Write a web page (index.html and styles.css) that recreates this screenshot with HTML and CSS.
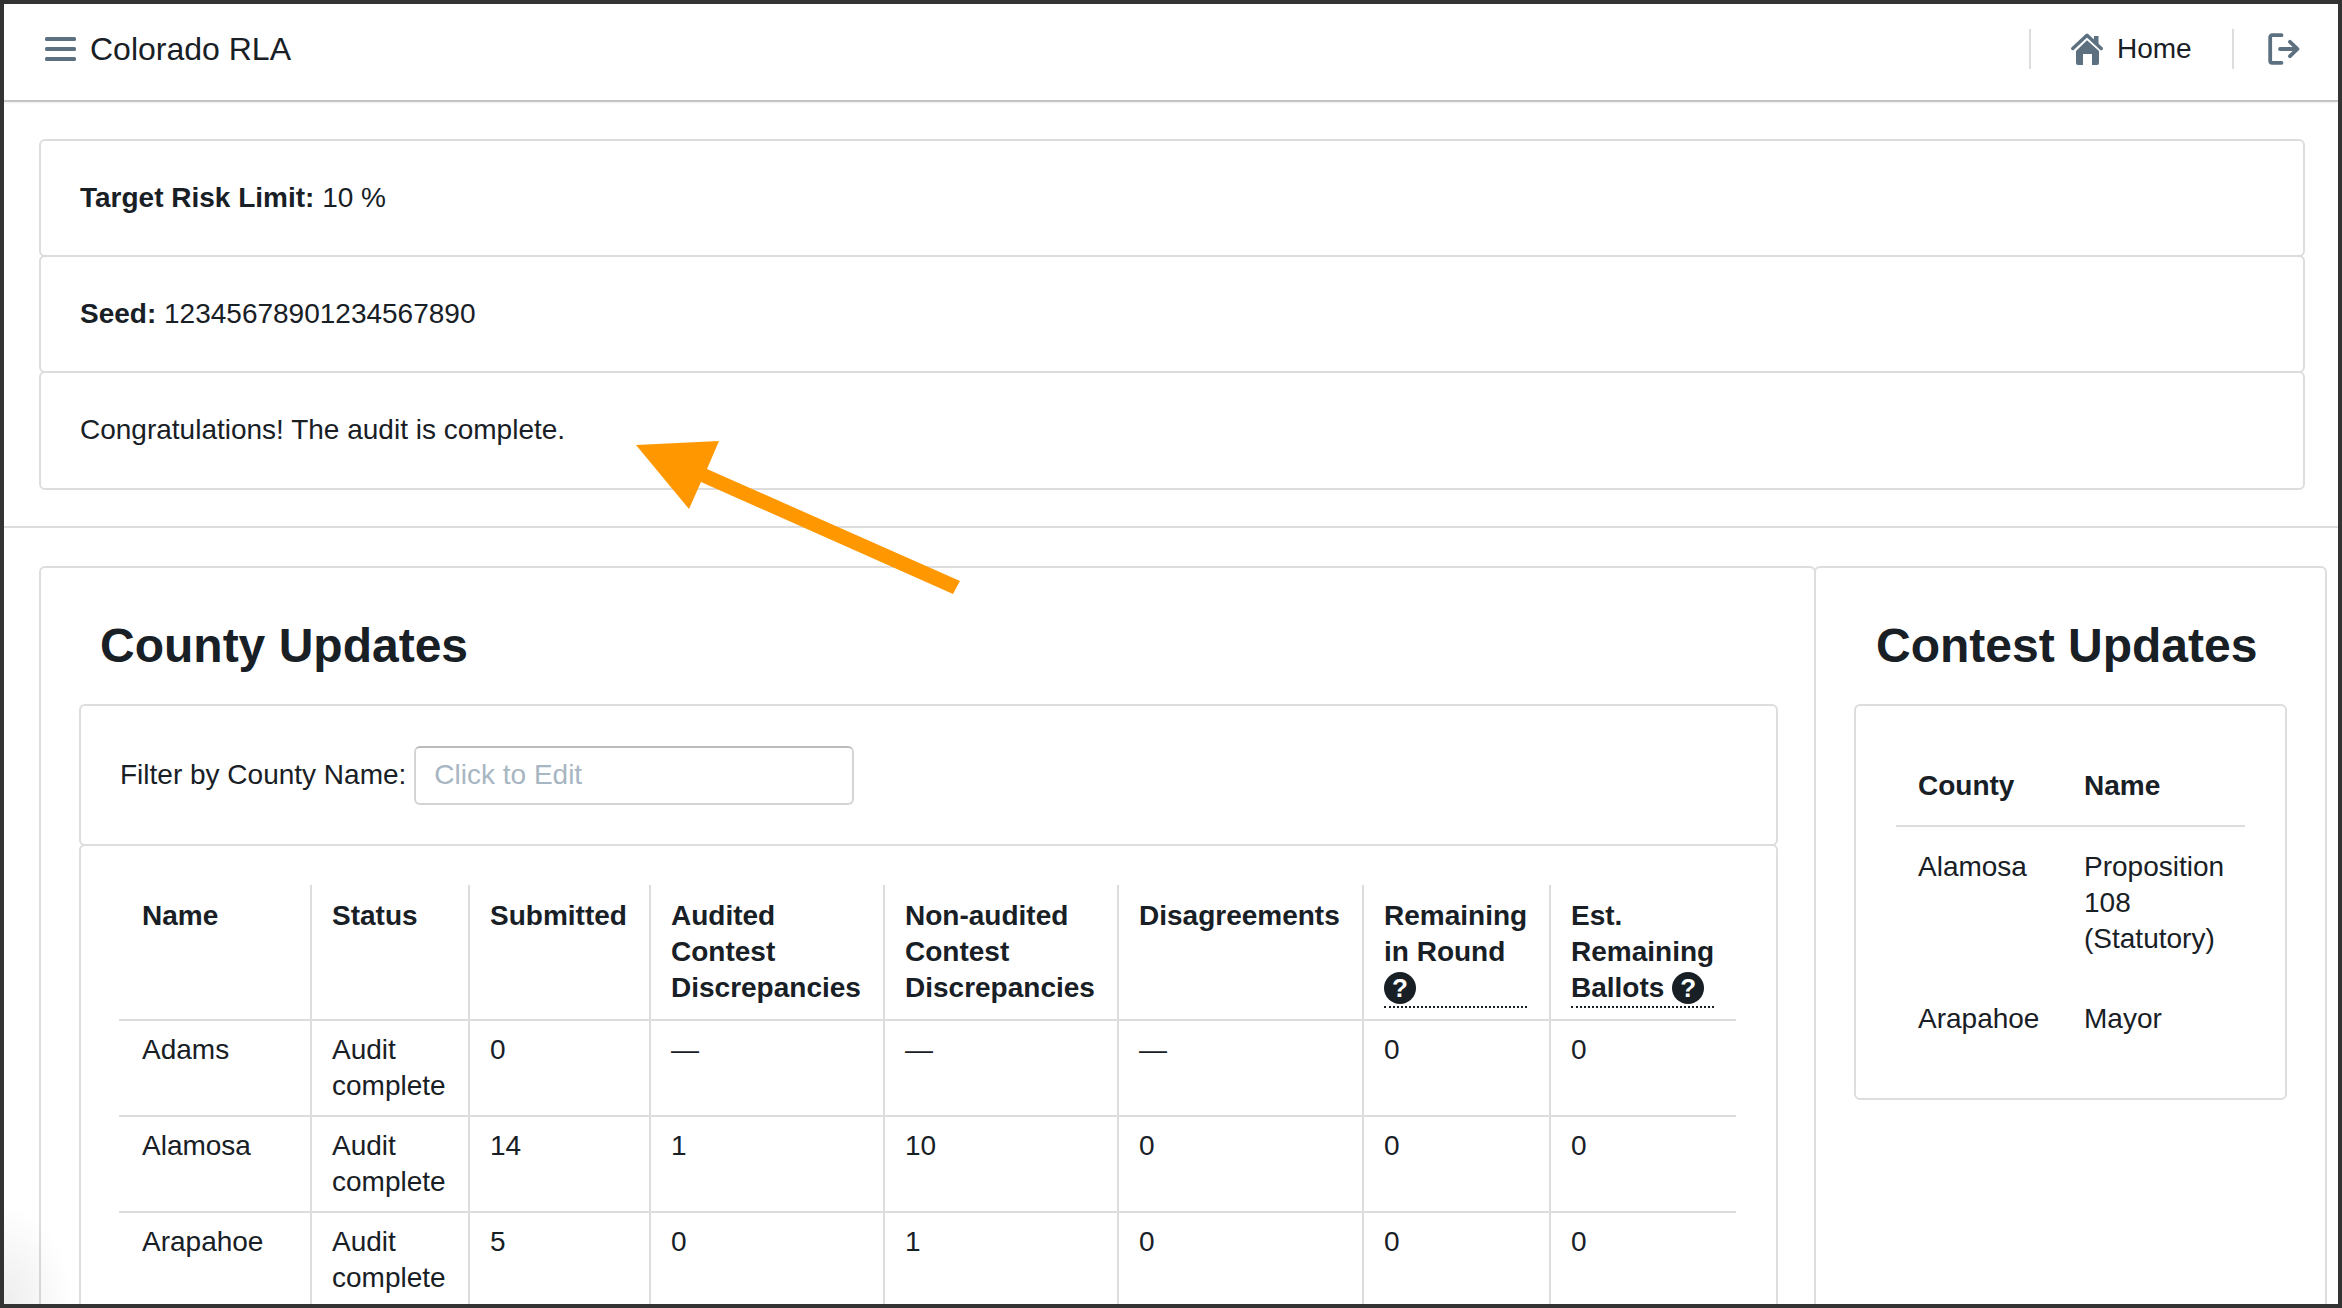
FILE: index.html
```html
<!DOCTYPE html>
<html lang="en">
<head>
    <meta charset="UTF-8">
    <meta name="viewport" content="width=device-width, initial-scale=1.0">
    <title>Colorado RLA</title>
    <link rel="stylesheet" href="styles.css">
</head>
<body>
    <div class="page">
        <nav class="navbar">
            <svg class="menu-icon" viewBox="0 0 31 24" width="31" height="24">
                <rect x="0" y="0" width="31" height="4" rx="1.5"/>
                <rect x="0" y="10" width="31" height="4" rx="1.5"/>
                <rect x="0" y="20" width="31" height="4" rx="1.5"/>
            </svg>
            <span class="brand">Colorado RLA</span>
            <div class="nav-right">
                <a class="nav-item nav-home">
                    <svg class="home-icon" viewBox="0 0 32 32" width="32" height="32">
                        <path d="M1.8 15.5 16 2.2l14.2 13.3" fill="none" stroke-width="3.4" stroke-linecap="round" stroke-linejoin="round"/>
                        <rect x="23" y="3" width="4.5" height="8" stroke="none"/>
                        <path d="M16 7.2 28 18v12a2 2 0 0 1-2 2h-5V21h-9v11H7a2 2 0 0 1-2-2V18z" stroke="none"/>
                    </svg>
                    Home
                </a>
                <a class="nav-item nav-logout">
                    <svg class="logout-icon" viewBox="0 0 32 32" width="32" height="32">
                        <path d="M13.5 2.2H4.2a2 2 0 0 0-2 2v23.6a2 2 0 0 0 2 2h9.3"/>
                        <path d="M12 16h17M22 8.800 29.500 16 22 23.200"/>
                    </svg>
                </a>
            </div>
        </nav>

        <div class="info-stack">
            <div class="card info-card"><strong>Target Risk Limit:</strong> 10 %</div>
            <div class="card info-card"><strong>Seed:</strong> 12345678901234567890</div>
            <div class="card info-card info-last">Congratulations! The audit is complete.</div>
        </div>

        <hr class="divider">

        <div class="updates">
            <section class="card panel county-panel">
                <h2>County Updates</h2>
                <div class="card filter-card">
                    <label for="countyFilter">Filter by County Name:</label>
                    <input id="countyFilter" type="text" placeholder="Click to Edit">
                </div>
                <div class="card table-card">
                    <table class="county-table">
                        <colgroup>
                            <col class="c-name"><col class="c-status"><col class="c-sub"><col class="c-aud">
                            <col class="c-non"><col class="c-dis"><col class="c-rem"><col class="c-est">
                        </colgroup>
                        <thead>
                            <tr>
                                <th>Name</th>
                                <th>Status</th>
                                <th>Submitted</th>
                                <th>Audited Contest Discrepancies</th>
                                <th>Non-audited Contest Discrepancies</th>
                                <th>Disagreements</th>
                                <th><span class="tip">Remaining in Round <span class="help">?</span></span></th>
                                <th><span class="tip">Est. Remaining Ballots <span class="help">?</span></span></th>
                            </tr>
                        </thead>
                        <tbody>
                            <tr>
                                <td>Adams</td><td>Audit complete</td><td>0</td><td>—</td><td>—</td><td>—</td><td>0</td><td>0</td>
                            </tr>
                            <tr>
                                <td>Alamosa</td><td>Audit complete</td><td>14</td><td>1</td><td>10</td><td>0</td><td>0</td><td>0</td>
                            </tr>
                            <tr>
                                <td>Arapahoe</td><td>Audit complete</td><td>5</td><td>0</td><td>1</td><td>0</td><td>0</td><td>0</td>
                            </tr>
                        </tbody>
                    </table>
                </div>
            </section>

            <section class="card panel contest-panel">
                <h2>Contest Updates</h2>
                <div class="card contest-card">
                    <table class="contest-table">
                        <thead>
                            <tr><th class="c-county">County</th><th>Name</th></tr>
                        </thead>
                        <tbody>
                            <tr><td>Alamosa</td><td>Proposition 108 (Statutory)</td></tr>
                            <tr><td>Arapahoe</td><td>Mayor</td></tr>
                        </tbody>
                    </table>
                </div>
            </section>
        </div>

        <!-- annotation drawn over the screenshot -->
        <svg class="arrow" viewBox="0 0 340 160" width="340" height="160">
            <polygon points="6,9 89,5 77,33 330,145 323,158 71,46 59,73"/>
        </svg>
        <div class="corner-shade"></div>
    </div>
</body>
</html>
```

FILE: styles.css
```css
* {
    box-sizing: border-box;
}
body {
    margin: 0;
    font-family: "Liberation Sans", Arial, sans-serif;
    font-size: 28px;
    line-height: 36px;
    color: #182026;
    background: #fff;
}
.page {
    position: relative;
    width: 2342px;
    height: 1308px;
    overflow: hidden;
    border: 4px solid #333;
    background: #fff;
}

/* navbar */
.navbar {
    display: flex;
    align-items: center;
    height: 98px;
    padding: 0 0 6px 41px;
    border-bottom: 2px solid #c4c4c4;
    box-shadow: 0 1px 2px rgba(0, 0, 0, 0.08);
}
.menu-icon {
    fill: #5c7080;
}
.brand {
    margin-left: 14px;
    font-size: 32px;
}
.nav-right {
    display: flex;
    align-items: center;
    margin-left: auto;
}
.nav-item {
    display: flex;
    align-items: center;
    height: 40px;
    border-left: 2px solid #ddd;
}
.nav-home {
    width: 203px;
    padding-left: 40px;
    gap: 14px;
}
.nav-logout {
    width: 106px;
    padding-left: 34px;
}
.home-icon {
    fill: #5c7080;
    stroke: #5c7080;
}
.logout-icon {
    fill: none;
    stroke: #5c7080;
    stroke-width: 3.8;
    stroke-linecap: round;
    stroke-linejoin: round;
}

/* cards */
.card {
    border: 2px solid #ddd;
    border-radius: 6px;
    background: #fff;
}
.info-stack {
    margin: 37px 33px 0 35px;
}
.info-card {
    height: 118px;
    margin-bottom: -2px;
    padding: 39px 39px;
}
.info-last {
    height: 119px;
    margin-bottom: 0;
}
.divider {
    height: 2px;
    margin: 36px 0 38px;
    border: 0;
    background: #ddd;
}

/* update panels */
.updates {
    display: flex;
    align-items: flex-start;
    margin: 0 11px 0 35px;
}
.panel {
    padding: 50px 38px 0;
}
.panel h2 {
    margin: 0 0 30px 21px;
    font-size: 48px;
    line-height: 56px;
    font-weight: bold;
}
.county-panel {
    width: 1777px;
    height: 900px;
    padding-right: 36px;
}
.contest-panel {
    width: 513px;
    height: 900px;
    margin-left: -2px;
}
.contest-panel h2 {
    margin-left: 22px;
    white-space: nowrap;
}
.filter-card {
    display: flex;
    align-items: center;
    height: 142px;
    padding: 0 39px;
    gap: 8px;
}
.filter-card input {
    width: 440px;
    height: 59px;
    padding: 0 18px;
    font: inherit;
    color: #182026;
    border: 2px solid #d4d4d4;
    border-top-color: #bbb;
    border-radius: 6px;
}
.filter-card input::placeholder {
    color: #a7b6c2;
}

/* county table */
.table-card {
    height: 700px;
    margin-top: -2px;
    padding: 39px 38px;
}
table {
    border-collapse: separate;
    border-spacing: 0;
}
.county-table {
    table-layout: fixed;
    width: 1617px;
}
.c-name { width: 191px; }
.c-status { width: 158px; }
.c-sub { width: 181px; }
.c-aud { width: 234px; }
.c-non { width: 234px; }
.c-dis { width: 245px; }
.c-rem { width: 187px; }
.c-est { width: 187px; }
th, td {
    text-align: left;
    vertical-align: top;
}
.county-table th, .county-table td {
    padding: 13px 22px 11px 20px;
    border-left: 2px solid #ddd;
    border-bottom: 2px solid #ddd;
}
.county-table td {
    padding-top: 11px;
}
.county-table th:first-child, .county-table td:first-child {
    padding-left: 23px;
    border-left: 0;
}
.tip {
    display: inline-block;
    vertical-align: top;
    border-bottom: 2px dotted #182026;
}
.help {
    display: inline-block;
    width: 32px;
    height: 32px;
    vertical-align: top;
    margin-top: 2px;
    border-radius: 50%;
    background: #182026;
    color: #fff;
    font-size: 26px;
    line-height: 32px;
    text-align: center;
}

/* contest table */
.contest-card {
    height: 396px;
    padding: 39px 0 39px 40px;
}
.contest-table {
    table-layout: fixed;
    width: 349px;
}
.c-county {
    width: 166px;
}
.contest-table th, .contest-table td {
    padding: 23px 22px;
}
.contest-table th {
    padding-bottom: 21px;
    border-bottom: 2px solid #ddd;
}
.contest-table td {
    padding-top: 22px;
    padding-bottom: 22px;
}
.contest-table td:last-child {
    padding-right: 0;
}

/* overlays */
.arrow {
    position: absolute;
    left: 626px;
    top: 432px;
    fill: #ff9800;
}
.corner-shade {
    position: absolute;
    left: 0;
    bottom: 0;
    width: 70px;
    height: 100px;
    background: radial-gradient(ellipse at 0 100%, rgba(0, 0, 0, 0.07), rgba(0, 0, 0, 0) 70%);
    pointer-events: none;
}
```
